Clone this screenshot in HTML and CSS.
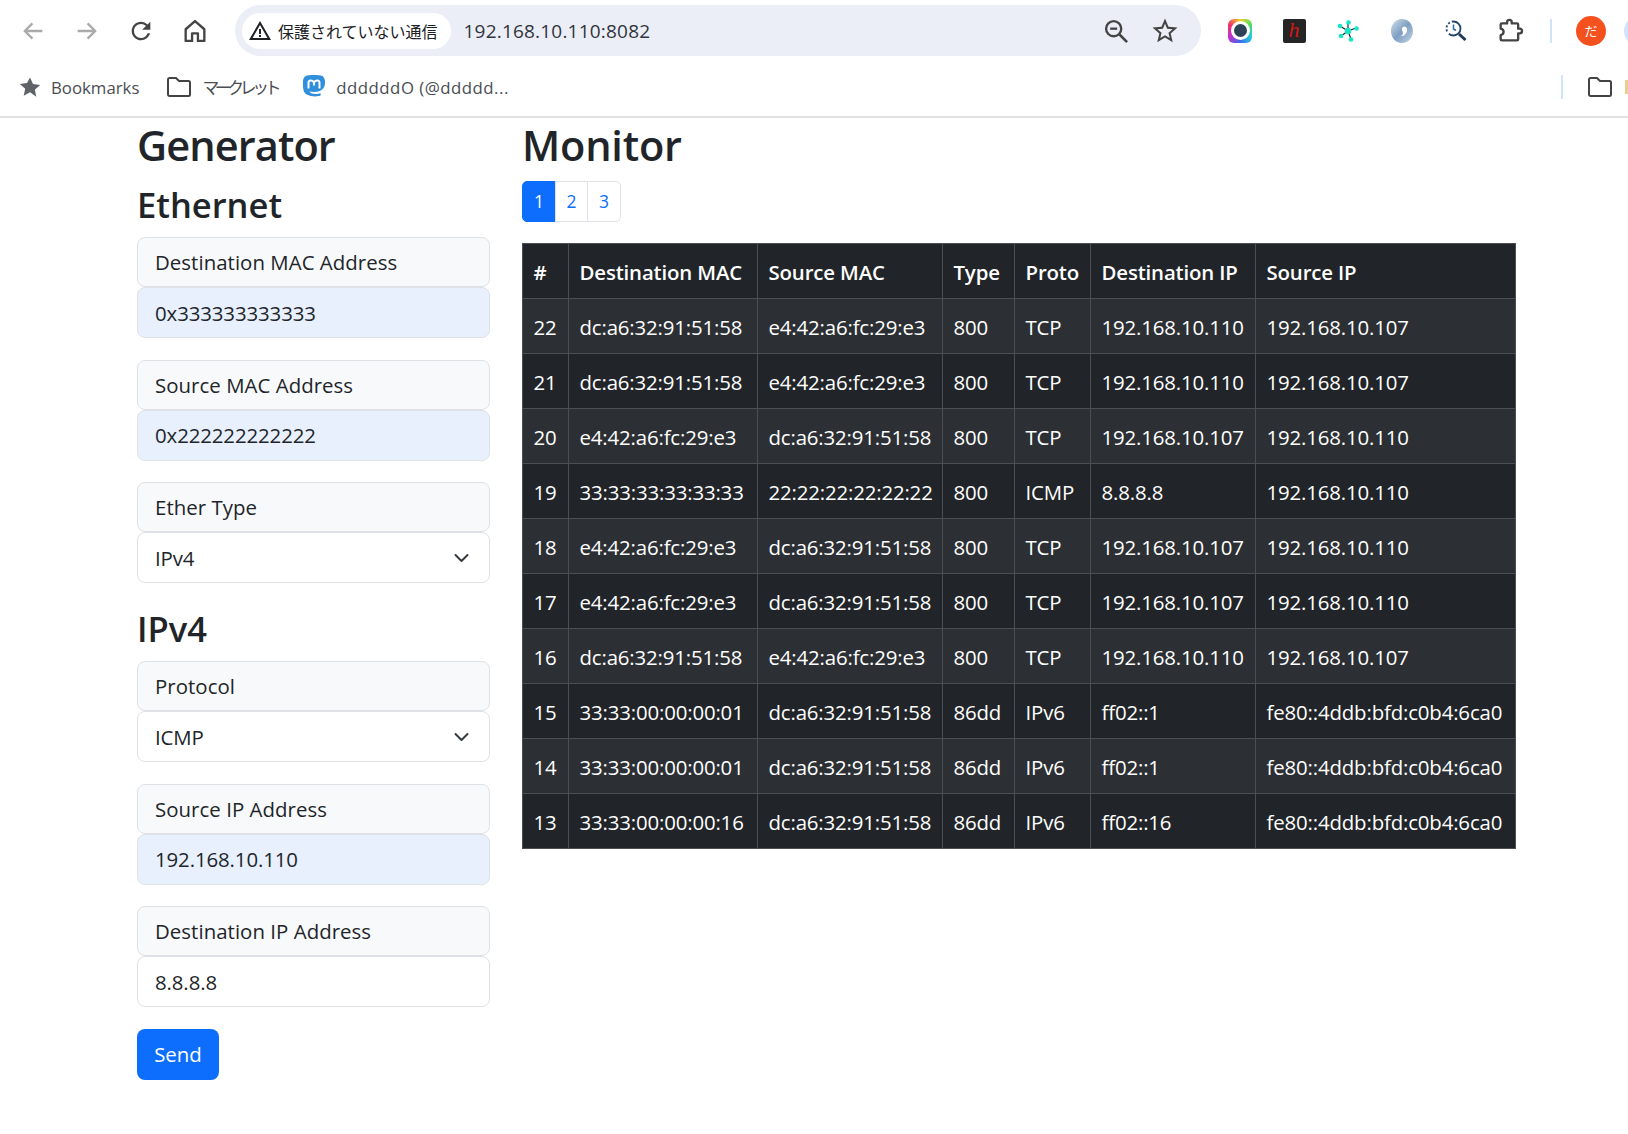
FILE: index.html
```html
<!DOCTYPE html>
<html lang="ja">
<head>
    <meta charset="UTF-8">
    <meta name="viewport" content="width=device-width, initial-scale=1.0">
    <title>Packet Generator</title>
    <link rel="stylesheet" href="styles.css">
</head>
<body>
    <div class="browser">
        <div class="toolbar">
            <div class="nav-btn nav-off">
                <svg viewBox="0 0 24 24" width="28" height="28"><path d="M20 12H5M11.500 5.500 5 12l6.500 6.500" fill="none" stroke="currentColor" stroke-width="2"/></svg>
            </div>
            <div class="nav-btn nav-off">
                <svg viewBox="0 0 24 24" width="28" height="28"><path d="M4 12h15M12.500 5.500 19 12l-6.500 6.500" fill="none" stroke="currentColor" stroke-width="2"/></svg>
            </div>
            <div class="nav-btn">
                <svg viewBox="0 0 24 24" width="28" height="28"><path d="M17.650 6.350A7.958 7.958 0 0 0 12 4c-4.420 0-7.990 3.580-7.990 8s3.570 8 7.990 8c3.730 0 6.840-2.550 7.730-6h-2.080A5.990 5.990 0 0 1 12 18c-3.310 0-6-2.690-6-6s2.690-6 6-6c1.660 0 3.140.690 4.220 1.780L13 11h7V4l-2.350 2.350z" fill="currentColor"/></svg>
            </div>
            <div class="nav-btn">
                <svg viewBox="0 0 24 24" width="28" height="28"><path d="M12 3.500 4 10.500V20.500h5.500v-6.500h5v6.500H20V10.500z" fill="none" stroke="currentColor" stroke-width="2" stroke-linejoin="round"/></svg>
            </div>
            <div class="omnibox">
                <div class="chip">
                    <svg viewBox="0 0 24 24" width="24" height="24"><path d="M1 21h22L12 2 1 21zm3.500-2L12 6l7.500 13h-15z" fill="#202124"/><path d="M11 10h2v5h-2zM11 16h2v2h-2z" fill="#202124"/></svg>
                    <span>保護されていない通信</span>
                </div>
                <span class="url">192.168.10.110:8082</span>
                <div class="omni-icons">
                    <svg viewBox="0 0 24 24" width="28" height="28"><circle cx="10" cy="10" r="6.500" fill="none" stroke="#444" stroke-width="2"/><path d="M7 10h6" stroke="#444" stroke-width="2"/><path d="m15 15 6.500 6.500" stroke="#444" stroke-width="2.200"/></svg>
                    <svg viewBox="0 0 24 24" width="30" height="30"><path d="M22 9.240l-7.190-.620L12 2 9.190 8.630 2 9.240l5.460 4.730L5.820 21 12 17.270 18.180 21l-1.630-7.030L22 9.240zM12 15.400l-3.760 2.270 1-4.280-3.320-2.880 4.380-.380L12 6.100l1.710 4.040 4.380.380-3.320 2.880 1 4.280L12 15.400z" fill="#444"/></svg>
                </div>
            </div>
            <div class="ext-list">
                <div class="ext"><span class="ext-camera"><span class="ext-lens"></span></span></div>
                <div class="ext"><span class="ext-h">h</span></div>
                <div class="ext">
                    <svg viewBox="0 0 24 24" width="24" height="24"><path d="M12 12 12 3M12 12 4 7M12 12 20 9M12 12 5 17M12 12 15 20" stroke="#222" stroke-width="1.200"/><g fill="#12e8c8"><circle cx="12" cy="12" r="3.200"/><circle cx="12.500" cy="3.500" r="2.300"/><circle cx="4" cy="7" r="2.300"/><circle cx="20.500" cy="9.500" r="2.300"/><circle cx="5" cy="17" r="2.300"/><circle cx="15" cy="20.500" r="2.300"/></g></svg>
                </div>
                <div class="ext">
                    <svg viewBox="0 0 24 26" width="24" height="26"><defs><linearGradient id="swirl" x1="0" y1="0" x2="1" y2="1"><stop offset="0" stop-color="#d3e0ec"/><stop offset="0.5" stop-color="#7f9fc2"/><stop offset="1" stop-color="#c4d5e4"/></linearGradient></defs><path d="M12 1C5.500 1 1 6.500 1 13s4.500 12 11 12 11-5.500 11-12S18.500 1 12 1zm2 7.500c2.500 0 3.500 2 3 4.500-.5 3-3.500 5.500-6 5 2-1 2.500-3 1.500-5-.8-1.500-1-3.500 1.500-4.500z" fill="url(#swirl)"/></svg>
                </div>
                <div class="ext">
                    <svg viewBox="0 0 24 24" width="24" height="24"><circle cx="9.500" cy="9.500" r="7" fill="none" stroke="#1f4468" stroke-width="1.800" stroke-dasharray="16 3 2 2 2 2 2 2"/><path d="M9.500 5.500v4.500l2.500 1.500" fill="none" stroke="#2a6cb0" stroke-width="1.500"/><path d="m15 15 6.500 6" stroke="#1f3a55" stroke-width="3"/></svg>
                </div>
                <div class="ext">
                    <svg viewBox="0 0 24 24" width="28" height="28"><path d="M4 6.500c0-.5.400-1 1-1h4.500v-1a2 2 0 0 1 4 0v1H18c.6 0 1 .5 1 1v3.500h1.300a2 2 0 0 1 0 4H19v5c0 .5-.4 1-1 1H5c-.6 0-1-.5-1-1v-3.500c1.500-.3 2.500-1.300 2.500-2.800S5.500 10.300 4 10z" fill="none" stroke="#444" stroke-width="2" stroke-linejoin="round"/></svg>
                </div>
            </div>
            <div class="tool-sep"></div>
            <div class="avatar">だ</div>
            <div class="avatar-next"></div>
        </div>
        <div class="bookmarks">
            <div class="bm bm-first">
                <svg viewBox="0 0 24 24" width="24" height="24"><path d="m12 2.500 3 6.600 7.200.8-5.400 4.800 1.500 7.100L12 17.200l-6.300 3.600 1.500-7.100-5.400-4.800 7.200-.8z" fill="#5f6368"/></svg>
                <span>Bookmarks</span>
            </div>
            <div class="bm bm-folder">
                <svg class="folder" viewBox="0 0 26 22" width="26" height="22"><path d="M2 3.500c0-.8.700-1.500 1.500-1.500h6.500l3 3h9.500c.8 0 1.500.7 1.500 1.500V18.500c0 .8-.7 1.500-1.500 1.500h-19c-.8 0-1.500-.7-1.500-1.500z" fill="none" stroke="#444" stroke-width="2"/></svg>
                <span class="bm-jp">マークレット</span>
            </div>
            <div class="bm bm-toot">
                <svg viewBox="0 0 24 26" width="24" height="26"><path d="M23 7.500C23 3.500 20.200 2 20.200 2 17.500.7 6.500.7 3.800 2 3.800 2 1 3.500 1 7.500c0 5.500-.3 11 3.800 13 3.200 1.500 7.500 2.500 11.700 1.600 1.600-.3 2.200-.9 2.200-.9v-2c-3.200 1-9.600 1.500-11.200-1.700 6.400 1 16 1 15.500-10z" fill="#2f8fdc"/><path d="M6.500 14.500V8.800c0-3 3.700-3 5.500-.5 1.800-2.500 5.500-2.500 5.500.5v5.700" fill="none" stroke="#fff" stroke-width="2"/><path d="M12 8.300v3.200" stroke="#fff" stroke-width="2"/></svg>
                <span class="bm-toot-text">ddddddO (@ddddd...</span>
            </div>
            <div class="bm-sep"></div>
            <svg class="folder" viewBox="0 0 26 22" width="26" height="22"><path d="M2 3.500c0-.8.700-1.500 1.500-1.500h6.500l3 3h9.500c.8 0 1.500.7 1.500 1.500V18.500c0 .8-.7 1.500-1.500 1.500h-19c-.8 0-1.500-.7-1.500-1.500z" fill="none" stroke="#444" stroke-width="2"/></svg>
            <div class="bm-clipped"></div>
        </div>
    </div>

    <div class="page">
        <div class="generator">
            <h1>Generator</h1>
            <form>
                <h2>Ethernet</h2>
                <div class="field">
                    <label class="field-label">Destination MAC Address</label>
                    <input class="field-input autofilled" type="text" value="0x333333333333">
                </div>
                <div class="field">
                    <label class="field-label">Source MAC Address</label>
                    <input class="field-input autofilled" type="text" value="0x222222222222">
                </div>
                <div class="field">
                    <label class="field-label">Ether Type</label>
                    <select class="field-input field-select">
                        <option>IPv4</option>
                        <option>IPv6</option>
                    </select>
                </div>
                <h2 class="section-ipv4">IPv4</h2>
                <div class="field">
                    <label class="field-label">Protocol</label>
                    <select class="field-input field-select">
                        <option>ICMP</option>
                        <option>TCP</option>
                    </select>
                </div>
                <div class="field">
                    <label class="field-label">Source IP Address</label>
                    <input class="field-input autofilled" type="text" value="192.168.10.110">
                </div>
                <div class="field">
                    <label class="field-label">Destination IP Address</label>
                    <input class="field-input" type="text" value="8.8.8.8">
                </div>
                <button class="send-btn" type="button">Send</button>
            </form>
        </div>

        <div class="monitor">
            <h1>Monitor</h1>
            <div class="pagination">
                <a href="#" class="page-link active">1</a>
                <a href="#" class="page-link">2</a>
                <a href="#" class="page-link">3</a>
            </div>
            <table class="packets">
                <thead>
                    <tr>
                        <th class="col-no">#</th>
                        <th class="col-dmac">Destination MAC</th>
                        <th class="col-smac">Source MAC</th>
                        <th class="col-type">Type</th>
                        <th class="col-proto">Proto</th>
                        <th class="col-dip">Destination IP</th>
                        <th class="col-sip">Source IP</th>
                    </tr>
                </thead>
                <tbody>
                    <tr><td>22</td><td>dc:a6:32:91:51:58</td><td>e4:42:a6:fc:29:e3</td><td>800</td><td>TCP</td><td>192.168.10.110</td><td>192.168.10.107</td></tr>
                    <tr><td>21</td><td>dc:a6:32:91:51:58</td><td>e4:42:a6:fc:29:e3</td><td>800</td><td>TCP</td><td>192.168.10.110</td><td>192.168.10.107</td></tr>
                    <tr><td>20</td><td>e4:42:a6:fc:29:e3</td><td>dc:a6:32:91:51:58</td><td>800</td><td>TCP</td><td>192.168.10.107</td><td>192.168.10.110</td></tr>
                    <tr><td>19</td><td>33:33:33:33:33:33</td><td>22:22:22:22:22:22</td><td>800</td><td>ICMP</td><td>8.8.8.8</td><td>192.168.10.110</td></tr>
                    <tr><td>18</td><td>e4:42:a6:fc:29:e3</td><td>dc:a6:32:91:51:58</td><td>800</td><td>TCP</td><td>192.168.10.107</td><td>192.168.10.110</td></tr>
                    <tr><td>17</td><td>e4:42:a6:fc:29:e3</td><td>dc:a6:32:91:51:58</td><td>800</td><td>TCP</td><td>192.168.10.107</td><td>192.168.10.110</td></tr>
                    <tr><td>16</td><td>dc:a6:32:91:51:58</td><td>e4:42:a6:fc:29:e3</td><td>800</td><td>TCP</td><td>192.168.10.110</td><td>192.168.10.107</td></tr>
                    <tr><td>15</td><td>33:33:00:00:00:01</td><td>dc:a6:32:91:51:58</td><td>86dd</td><td>IPv6</td><td>ff02::1</td><td>fe80::4ddb:bfd:c0b4:6ca0</td></tr>
                    <tr><td>14</td><td>33:33:00:00:00:01</td><td>dc:a6:32:91:51:58</td><td>86dd</td><td>IPv6</td><td>ff02::1</td><td>fe80::4ddb:bfd:c0b4:6ca0</td></tr>
                    <tr><td>13</td><td>33:33:00:00:00:16</td><td>dc:a6:32:91:51:58</td><td>86dd</td><td>IPv6</td><td>ff02::16</td><td>fe80::4ddb:bfd:c0b4:6ca0</td></tr>
                </tbody>
            </table>
        </div>
    </div>
</body>
</html>
```
FILE: styles.css
```css
body, html {
    margin: 0;
    padding: 0;
    background-color: white;
    font-family: "Open Sans", "Noto Sans CJK JP", sans-serif;
    color: #212529;
}
.browser {
    height: 116px;
    border-bottom: 2px solid #e2e2e2;
    overflow: hidden;
}
.toolbar {
    display: flex;
    align-items: center;
    height: 61px;
    padding-left: 6px;
    width: 1660px;
    box-sizing: border-box;
}
.toolbar > * {
    flex: none;
}
.nav-btn {
    width: 54px;
    display: flex;
    justify-content: center;
    color: #444;
}
.nav-off {
    color: #aaa;
}
.omnibox {
    display: flex;
    align-items: center;
    width: 966px;
    height: 51px;
    margin-left: 13px;
    border-radius: 26px;
    background-color: #ebeef7;
    box-sizing: border-box;
    padding: 0 21px 0 7px;
}
.chip {
    display: flex;
    align-items: center;
    gap: 6px;
    height: 36px;
    padding: 0 13px 0 6px;
    border-radius: 18px;
    background-color: white;
    font-size: 16px;
    color: #202124;
}
.url {
    margin-left: 13px;
    font-size: 19px;
    letter-spacing: 0.200px;
    color: #30343c;
}
.omni-icons {
    margin-left: auto;
    display: flex;
    align-items: center;
    gap: 20px;
}
.ext-list {
    display: flex;
    margin-left: 12px;
}
.ext {
    width: 54px;
    height: 30px;
    display: flex;
    justify-content: center;
    align-items: center;
}
.ext-camera {
    width: 24px;
    height: 24px;
    border-radius: 6px;
    background: conic-gradient(#f5d020, #4ade60, #22c8e0, #3a6ae8, #c030d0, #f03070, #f5d020);
    display: flex;
    justify-content: center;
    align-items: center;
}
.ext-lens {
    width: 13px;
    height: 13px;
    border-radius: 50%;
    background: #2d4257;
    border: 3px solid white;
}
.ext-h {
    width: 23px;
    height: 24px;
    border-radius: 2px;
    background: #252525;
    color: #d01818;
    font-family: "Liberation Serif", serif;
    font-style: italic;
    font-size: 22px;
    line-height: 22px;
    text-align: center;
}
.tool-sep {
    width: 2px;
    height: 24px;
    margin-left: 13px;
    background-color: #d3e3fd;
}
.avatar {
    width: 30px;
    height: 30px;
    margin-left: 24px;
    border-radius: 50%;
    background-color: #f4511e;
    color: white;
    font-size: 13px;
    line-height: 30px;
    text-align: center;
}
.avatar-next {
    width: 30px;
    height: 30px;
    margin-left: 18px;
    border-radius: 50%;
    background-color: #d3e3fd;
}
.bookmarks {
    display: flex;
    align-items: center;
    height: 52px;
    padding-left: 18px;
    font-size: 16.800px;
    color: #4a4d52;
}
.bm {
    display: flex;
    align-items: center;
    gap: 9px;
}
.bm-first {
    margin-right: 27px;
}
.bm-folder {
    gap: 10px;
    margin-right: 25px;
}
.bm-jp {
    letter-spacing: -4.300px;
}
.bm-toot {
    gap: 10px;
}
.bm-toot-text {
    letter-spacing: 0.500px;
}
.bm-sep {
    width: 2px;
    height: 24px;
    margin-left: auto;
    background-color: #d3e3fd;
}
.bookmarks > .folder {
    margin: 0 12px 0 24px;
}
.bm-clipped {
    flex: none;
    width: 3px;
    height: 14px;
    background-color: #e8cf90;
}
.page {
    display: flex;
    align-items: flex-start;
    padding-left: 137px;
}
.generator {
    width: 353px;
    margin-right: 32px;
}
.monitor {
    width: 994px;
}
h1 {
    margin: 0;
    height: 55px;
    font-size: 41.500px;
    line-height: 55px;
    font-weight: 550;
    letter-spacing: -0.200px;
}
.generator h1 {
    letter-spacing: -0.900px;
}
h2 {
    margin: 6px 0 4px;
    height: 54px;
    font-size: 34.500px;
    line-height: 52px;
    font-weight: 600;
}
.section-ipv4 {
    margin: -1.500px 0 4px;
}
.field {
    display: flex;
    flex-direction: column;
    margin-bottom: 21.500px;
}
.field-label {
    height: 50px;
    box-sizing: border-box;
    padding: 0 17px;
    background-color: #f8f9fa;
    border: 1px solid #dee2e6;
    border-radius: 8px;
    font-size: 20.400px;
    letter-spacing: 0.050px;
    line-height: 48px;
}
.field-input {
    display: block;
    width: 100%;
    height: 51px;
    box-sizing: border-box;
    padding: 0 17px;
    background-color: white;
    border: 1px solid #dee2e6;
    border-radius: 8px;
    font-family: inherit;
    font-size: 20.400px;
    letter-spacing: -0.100px;
    color: #212529;
}
.field-input.autofilled {
    background-color: #e8f0fe;
}
.field-select {
    appearance: none;
    background-image: url("data:image/svg+xml,%3csvg xmlns='http://www.w3.org/2000/svg' viewBox='0 0 16 16'%3e%3cpath fill='none' stroke='%23343a40' stroke-linecap='round' stroke-linejoin='round' stroke-width='2' d='M2 5l6 6 6-6'/%3e%3c/svg%3e");
    background-repeat: no-repeat;
    background-position: right 17px center;
    background-size: 21px 16px;
}
.send-btn {
    display: block;
    width: 82px;
    height: 51px;
    padding: 0;
    background-color: #0d6efd;
    color: white;
    border: none;
    border-radius: 8px;
    font-family: inherit;
    font-size: 20.400px;
}
.pagination {
    display: flex;
    margin: 8px 0 21px;
    height: 41px;
}
.page-link {
    display: block;
    width: 33px;
    box-sizing: border-box;
    border: 1px solid #dee2e6;
    margin-left: -1px;
    color: #0d6efd;
    background-color: white;
    font-size: 17.500px;
    line-height: 39px;
    text-align: center;
    text-decoration: none;
}
.page-link:first-child {
    margin-left: 0;
    width: 34px;
    border-radius: 5px 0 0 5px;
}
.page-link:last-child {
    width: 34px;
    border-radius: 0 5px 5px 0;
}
.page-link.active {
    background-color: #0d6efd;
    border-color: #0d6efd;
    color: white;
}
.packets {
    width: 993px;
    table-layout: fixed;
    border-collapse: collapse;
    background-color: #212529;
    color: white;
    font-size: 20.400px;
    letter-spacing: -0.150px;
}
.packets th, .packets td {
    height: 55px;
    box-sizing: border-box;
    padding: 1px 10.500px 0;
    border: 1px solid #4b4f52;
    text-align: left;
    white-space: nowrap;
}
.packets th {
    font-weight: 600;
}
.packets tbody tr:nth-child(odd) {
    background-color: #2c3034;
}
.col-no { width: 46px; }
.col-dmac { width: 189px; }
.col-smac { width: 185px; }
.col-type { width: 72px; }
.col-proto { width: 76px; }
.col-dip { width: 165px; }
.col-sip { width: 260px; }
```
